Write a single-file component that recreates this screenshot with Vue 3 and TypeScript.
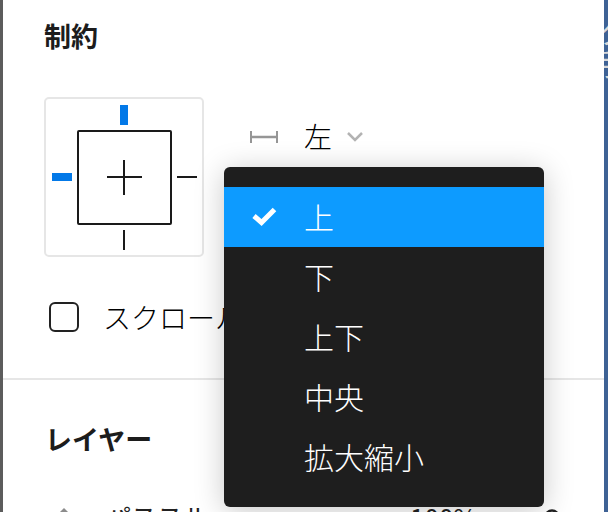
<script setup lang="ts">
const options = ["上", "下", "上下", "中央", "拡大縮小"];
const selected = "上";
</script>

<template>
  <div class="screen">
    <div class="panel">
      <section class="constraints">
        <h2 class="heading">制約</h2>
        <div class="controls">
          <div class="widget">
            <svg width="160" height="160" viewBox="0 0 160 160">
              <rect x="1" y="1" width="158" height="158" rx="4" fill="#fff" stroke="#e6e6e6" stroke-width="2" />
              <rect x="34" y="34" width="93" height="93" rx="1" fill="#fff" stroke="#1a1a1a" stroke-width="2" />
              <path d="M63 80h35M80 63v35M133 80h20M80 133v20" stroke="#1a1a1a" stroke-width="2" fill="none" />
              <path d="M76 8h8v20h-8zM8 76h20v8H8z" fill="#0379e8" />
            </svg>
          </div>
          <div class="select">
            <svg width="28" height="14" viewBox="0 0 28 14">
              <path d="M1 1v12M27 1v12" stroke="#969696" stroke-width="2" fill="none" />
              <path d="M1 7h26" stroke="#969696" stroke-width="2.5" fill="none" />
            </svg>
            <span class="select-label">左</span>
            <svg class="chevron" width="16" height="10" viewBox="0 0 16 10">
              <path d="M1 1l7 7 7-7" stroke="#b3b3b3" stroke-width="2.5" fill="none" />
            </svg>
          </div>
        </div>
        <div class="scroll-row">
          <span class="checkbox"></span>
          <span class="scroll-label">スクロール時に位置を固定</span>
        </div>
      </section>
      <section class="layer">
        <h2 class="heading">レイヤー</h2>
        <div class="layer-row">
          <svg class="blend" width="16" height="16" viewBox="0 0 16 16">
            <path d="M8 0l8 8-8 8-8-8z" fill="#8c8c8c" />
          </svg>
          <span class="layer-name">パススルー</span>
          <span class="opacity">100%</span>
          <svg class="eye" width="16" height="14" viewBox="0 0 16 14">
            <circle cx="8" cy="8" r="6.5" fill="none" stroke="#222" stroke-width="2.5" />
          </svg>
        </div>
      </section>
    </div>
    <div class="backdrop-text">
      <span>ク</span>
      <span>手</span>
    </div>
    <ul class="menu">
      <li v-for="option in options" :key="option" class="menu-item" :class="{ active: option === selected }">
        <svg v-if="option === selected" class="check" width="26" height="20" viewBox="0 0 26 20">
          <path d="M2 10l7.5 6.5 13-13" stroke="#fff" stroke-width="5" fill="none" />
        </svg>
        <span class="menu-text">{{ option }}</span>
      </li>
    </ul>
  </div>
</template>

<style>
html,
body {
  margin: 0;
  background: #fff;
}
</style>

<style scoped>
.screen {
  position: relative;
  display: flex;
  width: 608px;
  height: 512px;
  overflow: hidden;
  background: #3e6295;
  font-family: "Noto Sans CJK JP", "Liberation Sans", sans-serif;
}
.panel {
  width: 604px;
  height: 512px;
  flex: none;
  box-sizing: border-box;
  background: #fff;
  border-left: 3px solid #5c5c5c;
}
.constraints {
  height: 380px;
  box-sizing: border-box;
  padding: 18px 0 0 41px;
  border-bottom: 2px solid #e6e6e6;
}
.heading {
  margin: 0;
  font-size: 27px;
  line-height: 36px;
  font-weight: 700;
  color: #1c1c1c;
}
.controls {
  display: flex;
  margin-top: 43px;
}
.widget {
  width: 160px;
  height: 160px;
}
.widget svg {
  display: block;
}
.select {
  display: flex;
  align-items: center;
  height: 32px;
  margin: 24px 0 0 46px;
}
.select-label {
  margin-left: 26px;
  margin-top: -3px;
  font-size: 28px;
  font-weight: 300;
  line-height: 32px;
  color: #000;
}
.chevron {
  margin-left: 15px;
}
.scroll-row {
  display: flex;
  align-items: center;
  margin-top: 42px;
  padding-left: 5px;
}
.checkbox {
  width: 30px;
  height: 30px;
  flex: none;
  box-sizing: border-box;
  border: 2px solid #222;
  border-radius: 6px;
}
.scroll-label {
  margin-left: 24px;
  font-size: 28px;
  font-weight: 300;
  line-height: 36px;
  color: #000;
  white-space: nowrap;
}
.layer {
  padding: 41px 0 0 42px;
}
.layer-row {
  display: flex;
  align-items: center;
  height: 40px;
  margin-top: 39px;
  font-size: 26px;
  color: #222;
  white-space: nowrap;
}
.blend {
  margin-left: 11px;
}
.layer-name {
  margin-left: 33px;
}
.opacity {
  margin-left: 175px;
}
.eye {
  margin-left: 67px;
}
.backdrop-text {
  display: flex;
  flex-direction: column;
  flex: none;
  width: 4px;
  overflow: hidden;
  padding-top: 14px;
  font-size: 30px;
  line-height: 32px;
  color: #d8d8d8;
}
.backdrop-text span {
  margin-left: -6px;
}
.menu {
  position: absolute;
  left: 224px;
  top: 167px;
  width: 320px;
  height: 340px;
  box-sizing: border-box;
  margin: 0;
  padding: 20px 0;
  list-style: none;
  background: #1e1e1e;
  border-radius: 6px;
  box-shadow: 0 4px 30px rgba(0, 0, 0, 0.22);
}
.menu-item {
  position: relative;
  display: flex;
  align-items: center;
  height: 60px;
  padding-left: 80px;
  font-size: 30px;
  font-weight: 300;
  color: #fff;
}
.menu-text {
  margin-top: -3px;
}
.menu-item.active {
  background: #0d9bff;
}
.check {
  position: absolute;
  left: 28px;
  top: 19px;
}
</style>
